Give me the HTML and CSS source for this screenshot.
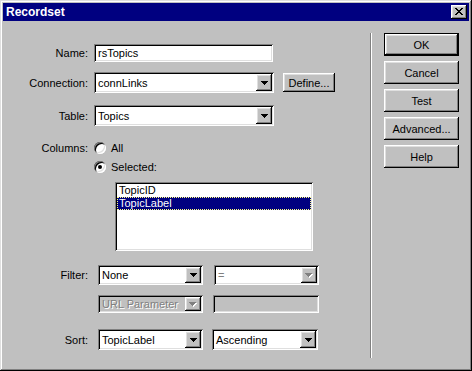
FILE: index.html
```html
<!DOCTYPE html>
<html lang="en">
  <head>
    <meta charset="UTF-8" />
    <title>Recordset</title>
    <link rel="stylesheet" href="styles.css">
  </head>
  <body>
    <div class="window">
      <div class="titlebar">
        <span class="title">Recordset</span>
        <span class="close">
          <svg width="8" height="7" viewBox="0 0 8 7" shape-rendering="crispEdges">
            <rect x="0" y="0" width="2" height="1" /><rect x="6" y="0" width="2" height="1" />
            <rect x="1" y="1" width="2" height="1" /><rect x="5" y="1" width="2" height="1" />
            <rect x="2" y="2" width="4" height="1" />
            <rect x="3" y="3" width="2" height="1" />
            <rect x="2" y="4" width="4" height="1" />
            <rect x="1" y="5" width="2" height="1" /><rect x="5" y="5" width="2" height="1" />
            <rect x="0" y="6" width="2" height="1" /><rect x="6" y="6" width="2" height="1" />
          </svg>
        </span>
      </div>

      <div class="content">
        <div class="form">
          <div class="row row-name">
            <span class="lbl">Name:</span>
            <div class="field name-field">rsTopics</div>
          </div>

          <div class="row row-conn">
            <span class="lbl">Connection:</span>
            <div class="select wide">
              <span class="value">connLinks</span>
              <span class="arrow"><svg width="7" height="4" viewBox="0 0 7 4" shape-rendering="crispEdges"><rect x="0" y="0" width="7" height="1"/><rect x="1" y="1" width="5" height="1"/><rect x="2" y="2" width="3" height="1"/><rect x="3" y="3" width="1" height="1"/></svg></span>
            </div>
            <span class="btn define">Define...</span>
          </div>

          <div class="row row-table">
            <span class="lbl">Table:</span>
            <div class="select wide">
              <span class="value">Topics</span>
              <span class="arrow"><svg width="7" height="4" viewBox="0 0 7 4" shape-rendering="crispEdges"><rect x="0" y="0" width="7" height="1"/><rect x="1" y="1" width="5" height="1"/><rect x="2" y="2" width="3" height="1"/><rect x="3" y="3" width="1" height="1"/></svg></span>
            </div>
          </div>

          <div class="row row-radio first-radio">
            <span class="lbl">Columns:</span>
            <span class="radio"></span>
            <span class="radio-text">All</span>
          </div>
          <div class="row row-radio second-radio">
            <span class="lbl"></span>
            <span class="radio checked"></span>
            <span class="radio-text">Selected:</span>
          </div>

          <div class="listbox">
            <div class="item">TopicID</div>
            <div class="item selected">TopicLabel</div>
          </div>

          <div class="row row-filter">
            <span class="lbl">Filter:</span>
            <div class="select small">
              <span class="value">None</span>
              <span class="arrow"><svg width="7" height="4" viewBox="0 0 7 4" shape-rendering="crispEdges"><rect x="0" y="0" width="7" height="1"/><rect x="1" y="1" width="5" height="1"/><rect x="2" y="2" width="3" height="1"/><rect x="3" y="3" width="1" height="1"/></svg></span>
            </div>
            <div class="select small second inactive">
              <span class="value">=</span>
              <span class="arrow"><svg width="8" height="5" viewBox="0 0 8 5" shape-rendering="crispEdges"><g fill="#fff"><rect x="1" y="1" width="7" height="1"/><rect x="2" y="2" width="5" height="1"/><rect x="3" y="3" width="3" height="1"/><rect x="4" y="4" width="1" height="1"/></g><g fill="#808080"><rect x="0" y="0" width="7" height="1"/><rect x="1" y="1" width="5" height="1"/><rect x="2" y="2" width="3" height="1"/><rect x="3" y="3" width="1" height="1"/></g></svg></span>
            </div>
          </div>

          <div class="row row-param">
            <span class="lbl"></span>
            <div class="select small disabled">
              <span class="value">URL Parameter</span>
              <span class="arrow"><svg width="8" height="5" viewBox="0 0 8 5" shape-rendering="crispEdges"><g fill="#fff"><rect x="1" y="1" width="7" height="1"/><rect x="2" y="2" width="5" height="1"/><rect x="3" y="3" width="3" height="1"/><rect x="4" y="4" width="1" height="1"/></g><g fill="#808080"><rect x="0" y="0" width="7" height="1"/><rect x="1" y="1" width="5" height="1"/><rect x="2" y="2" width="3" height="1"/><rect x="3" y="3" width="1" height="1"/></g></svg></span>
            </div>
            <div class="field disabled param-field"></div>
          </div>

          <div class="row row-sort">
            <span class="lbl">Sort:</span>
            <div class="select small">
              <span class="value">TopicLabel</span>
              <span class="arrow"><svg width="7" height="4" viewBox="0 0 7 4" shape-rendering="crispEdges"><rect x="0" y="0" width="7" height="1"/><rect x="1" y="1" width="5" height="1"/><rect x="2" y="2" width="3" height="1"/><rect x="3" y="3" width="1" height="1"/></svg></span>
            </div>
            <div class="select small order">
              <span class="value">Ascending</span>
              <span class="arrow"><svg width="7" height="4" viewBox="0 0 7 4" shape-rendering="crispEdges"><rect x="0" y="0" width="7" height="1"/><rect x="1" y="1" width="5" height="1"/><rect x="2" y="2" width="3" height="1"/><rect x="3" y="3" width="1" height="1"/></svg></span>
            </div>
          </div>
        </div>

        <div class="divider"></div>

        <div class="actions">
          <span class="btn action default">OK</span>
          <span class="btn action">Cancel</span>
          <span class="btn action">Test</span>
          <span class="btn action">Advanced...</span>
          <span class="btn action">Help</span>
        </div>
      </div>
    </div>
  </body>
</html>
```

FILE: styles.css
```css
html,
body {
  margin: 0;
  padding: 0;
  background: #c0c0c0;
}
body {
  font-family: "Liberation Sans", Arial, sans-serif;
  font-size: 11px;
  color: #000;
}
.window {
  box-sizing: border-box;
  width: 472px;
  height: 371px;
  padding: 3px;
  background: #c0c0c0;
  box-shadow: inset -1px -1px #000, inset 1px 1px #dfdfdf,
    inset -2px -2px #808080, inset 2px 2px #fff;
  display: flex;
  flex-direction: column;
}
.titlebar {
  height: 18px;
  background: #000080;
  display: flex;
  align-items: center;
  justify-content: space-between;
  padding: 0 2px 0 3px;
}
.title {
  color: #fff;
  font-weight: bold;
  font-size: 12px;
}
.close {
  box-sizing: border-box;
  width: 16px;
  height: 14px;
  background: #c0c0c0;
  box-shadow: inset -1px -1px #000, inset 1px 1px #fff,
    inset -2px -2px #808080, inset 2px 2px #dfdfdf;
  display: flex;
  align-items: center;
  justify-content: center;
  padding: 0 1px 1px 0;
}

.content {
  display: flex;
  flex: 1;
}
.form {
  width: 367px;
  display: flex;
  flex-direction: column;
}
.row {
  display: flex;
  align-items: center;
  gap: 6px;
}
.lbl {
  width: 85px;
  flex: none;
  text-align: right;
}
.row-name {
  margin-top: 23px;
  height: 18px;
}
.row-conn {
  margin-top: 10px;
  height: 21px;
}
.row-table {
  margin-top: 12px;
  height: 21px;
}
.row-radio {
  height: 13px;
  gap: 0;
}
.first-radio {
  margin-top: 15px;
}
.second-radio {
  margin-top: 6px;
}
.row-filter {
  margin-top: 14px;
  height: 20px;
  gap: 10px;
}
.row-param {
  margin-top: 10px;
  height: 18px;
  gap: 10px;
}
.row-sort {
  margin-top: 16px;
  height: 21px;
  gap: 10px;
}

.field,
.select,
.listbox {
  box-sizing: border-box;
  background: #fff;
  box-shadow: inset 1px 1px #808080, inset -1px -1px #fff,
    inset 2px 2px #000, inset -2px -2px #dfdfdf;
}
.field {
  height: 100%;
  padding: 0 4px;
  display: flex;
  align-items: center;
}
.name-field {
  width: 179px;
}
.select {
  height: 100%;
  padding: 2px;
  display: flex;
  align-items: stretch;
}
.select .value {
  flex: 1;
  padding-left: 2px;
  display: flex;
  align-items: center;
  white-space: nowrap;
  overflow: hidden;
}
.arrow,
.btn {
  box-sizing: border-box;
  background: #c0c0c0;
  box-shadow: inset -1px -1px #000, inset 1px 1px #fff,
    inset -2px -2px #808080, inset 2px 2px #dfdfdf;
}
.arrow {
  width: 16px;
  flex: none;
  display: flex;
  align-items: center;
  justify-content: center;
}
.wide {
  width: 180px;
}
.small {
  width: 105px;
}
.second {
  margin-left: 1px;
}
.order {
  margin-left: -1px;
  width: 106px;
}
.param-field {
  width: 106px;
}
.disabled {
  background: #c0c0c0;
}
.disabled .value,
.inactive .value {
  color: #808080;
  text-shadow: 1px 1px #fff;
}

.btn {
  display: flex;
  align-items: center;
  justify-content: center;
}
.define {
  width: 52px;
  height: 19px;
  margin-left: 3px;
}

.radio {
  box-sizing: border-box;
  width: 12px;
  height: 12px;
  margin: 0 5px 0 6px;
  border-radius: 50%;
  background: #fff;
  box-shadow: inset 1px 1px #808080, inset -1px -1px #fff,
    inset 2px 2px #000, inset -2px -2px #dfdfdf;
  display: flex;
  align-items: center;
  justify-content: center;
}
.checked::after {
  content: "";
  width: 4px;
  height: 4px;
  border-radius: 50%;
  background: #000;
}

.listbox {
  width: 198px;
  height: 69px;
  margin: 9px 0 0 112px;
  padding: 2px;
}
.item {
  height: 13px;
  line-height: 11px;
  border: 1px solid transparent;
  box-sizing: border-box;
  padding-left: 1px;
}
.selected {
  background: #000080;
  color: #fff;
  border: 1px dotted #ffff80;
}

.divider {
  width: 0;
  height: 325px;
  margin-top: 12px;
  border-left: 1px solid #808080;
  border-right: 1px solid #fff;
}
.actions {
  padding-left: 12px;
  margin-top: 12px;
  display: flex;
  flex-direction: column;
  gap: 5px;
}
.action {
  width: 75px;
  height: 23px;
}
.default {
  box-shadow: inset 0 0 0 1px #000, inset -2px -2px #000, inset 2px 2px #fff,
    inset -3px -3px #808080, inset 3px 3px #dfdfdf;
}
```
